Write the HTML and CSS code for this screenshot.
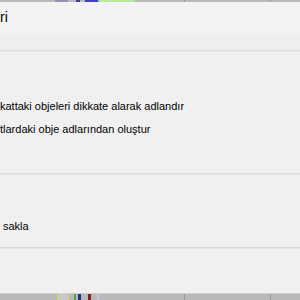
FILE: index.html
```html
<!DOCTYPE html>
<html lang="tr">
<head>
	<meta charset="UTF-8">
	<title>Ayarlar</title>
	<link rel="stylesheet" href="styles.css">
</head>
<body>
	<div id="screen">
		<div class="strip top">
			<span class="bit b1"></span>
			<span class="bit b2"></span>
			<span class="bit b3"></span>
			<span class="bit b4"></span>
			<span class="sep s1"></span>
			<span class="sep s2"></span>
		</div>
		<div class="header">
			<h1 class="title">ri</h1>
		</div>
		<div class="rule"></div>
		<div class="section first">
			<p class="opt">kattaki objeleri dikkate alarak adlandır</p>
			<p class="opt">tlardaki obje adlarından oluştur</p>
		</div>
		<div class="rule"></div>
		<div class="section second">
			<p class="opt in">sakla</p>
		</div>
		<div class="rule"></div>
		<div class="filler"></div>
		<div class="strip bottom">
			<span class="bit c1"></span>
			<span class="bit c2"></span>
			<span class="bit c3"></span>
			<span class="bit c4"></span>
			<span class="bit c5"></span>
			<span class="sep s1"></span>
			<span class="sep s2"></span>
		</div>
	</div>
</body>
</html>
```

FILE: styles.css
```css
*{
	margin: 0;
	padding: 0;
}
body{
	background: #f0f0f0;
	font-family: "Liberation Sans", Arial, sans-serif;
	font-size: 11px;
	color: #000;
}
#screen{
	width: 300px;
	height: 300px;
	overflow: hidden;
	display: flex;
	flex-direction: column;
}
.strip{
	position: relative;
	background: #b9b9b9;
	flex: none;
}
.strip.top{
	height: 2px;
}
.strip.bottom{
	height: 6px;
	border-top: 1px solid #d0d0d0;
}
.bit, .sep{
	position: absolute;
	top: 0;
	height: 100%;
}
.sep{
	width: 1px;
	background: #9a9a9a;
}
.s1{ left: 184px; }
.s2{ left: 270px; }
.b1{ left: 55px; width: 13px; background: #9a90b0; }
.b2{ left: 76px; width: 4px; background: #3a3aa0; }
.b3{ left: 85px; width: 12px; background: #4040c8; border-left: 1px solid #3030c0; }
.b4{ left: 100px; width: 35px; background: #b8e8a0; }
.c1{ left: 57px; width: 10px; background: #c8c8c8; border-left: 1px solid #d8d840; border-right: 1px solid #d8d840; }
.c2{ left: 74px; width: 2px; background: #5aa05a; }
.c3{ left: 78px; width: 3px; background: #2a2a90; }
.c4{ left: 88px; width: 3px; background: #8a2020; }
.c5{ left: 97px; width: 2px; background: #c8c8e0; }
.header{
	height: 48px;
	background: linear-gradient(#f3f3f3 0, #f3f3f3 30px, #eeeeee 33px, #eeeeee 100%);
	flex: none;
}
.title{
	font-weight: normal;
	font-size: 14px;
	line-height: 20px;
	padding-top: 5px;
}
.rule{
	height: 1px;
	border-top: 1px solid #dadada;
	background: #e6e6e6;
	flex: none;
}
.section{
	flex: none;
}
.section.first{
	padding-top: 43px;
	padding-bottom: 32px;
}
.section.second{
	padding-top: 40px;
	padding-bottom: 9px;
}
.opt{
	height: 23px;
	line-height: 23px;
	white-space: nowrap;
}
.in{
	padding-left: 3px;
}
.filler{
	flex: 1;
}
```
